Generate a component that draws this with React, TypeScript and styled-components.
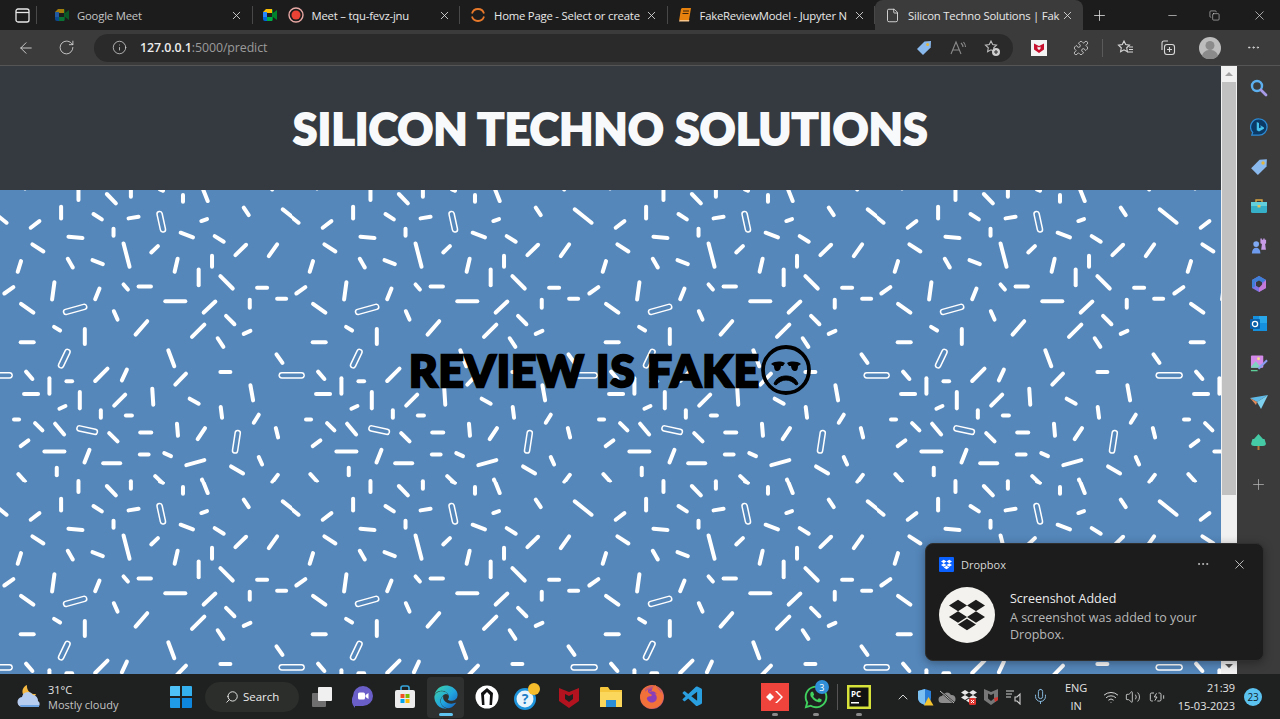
import React from "react";
import styled, { createGlobalStyle } from "styled-components";
import { ArrowLeft, RotateCw, Info, Search, X, Plus, Minus, MoreHorizontal, ChevronUp, Mic, Wifi, Volume2, BatteryCharging, Puzzle, Copy, File } from "lucide-react";
import { FaDropbox, FaEdge, FaWhatsapp, FaFirefoxBrowser } from "react-icons/fa";
import { VscVscode } from "react-icons/vsc";

const W = 877.5;
type L = [number, number, number, number, number?];
const lines: L[] = [
  [235,-6,235,30],[320,12,347,40],[392,-5,392,20],[548,15,548,35],[605,-10,622,33],[847,58,897,98],[92,113,118,93],[183,50,183,85],[280,72,305,88],[385,85,415,80],[478,72,488,118,1],[603,93,620,87],[730,53,745,75],[340,116,340,137],[205,140,247,144],[541,128,578,142],[643,138,670,155],[97,163,130,184],[453,187,473,168],[705,195,737,164],[805,198,830,163],[370,160,388,230],[203,206,218,232],[277,210,308,222],[53,245,63,213],[523,245,532,206],[635,197,635,230],[595,238,595,285],[660,258,697,295],[163,276,156,328],[298,295,285,327],[370,283,383,298],[415,289,452,289],[770,293,800,293],[13,310,40,291],[830,326,857,326],[495,333,555,333],[198,365,252,350,1],[63,341,100,367],[610,367,645,334],[748,329,748,353],[341,363,352,388],[677,377,702,402],[406,433,441,393],[162,410,180,421],[575,440,612,403],[730,431,750,422],[254,416,254,461],[62,456,101,456],[652,444,669,470],[183,525,202,485,1],[504,480,522,528],[828,492,846,518],[844,555,906,555,1],[78,544,97,566],[285,572,322,535],[365,570,380,538],[660,545,690,545],[525,583,557,550],[148,564,148,610],[199,573,216,573],[72,611,114,611],[750,585,758,630],[239,605,239,654],[342,646,375,613],[456,595,459,643],[568,625,595,640],[178,655,196,647],[661,650,665,682],[302,660,302,682],[377,675,395,675],[42,687,57,687],[760,697,775,673],[105,698,127,720],[165,700,192,732],[238,714,284,724,1],[530,700,533,736],[420,726,453,726],[592,746,614,713],[327,728,352,753],[826,713,833,741],[712,728,704,780,1],[62,767,85,750],[133,783,193,783],[253,816,268,778],[419,792,445,792],[492,788,512,797],[558,824,612,809],[309,818,360,818],[775,800,785,822],[692,828,728,849],[170,832,170,854],[55,851,75,873],[465,857,487,878],[815,876,832,853],[479,-2,488,2],
];
const BLUE = "#5587bb";
const tile = (() => {
  let s = "";
  for (const [a, b, c, d, o] of lines)
    for (const dx of [-W, 0, W])
      for (const dy of [-W, 0, W]) {
        const seg = `x1='${a + dx}' y1='${b + dy}' x2='${c + dx}' y2='${d + dy}' stroke-linecap='round'`;
        s += o
          ? `<line ${seg} stroke='#fff' stroke-width='20'/><line ${seg} stroke='${BLUE}' stroke-width='11'/>`
          : `<line ${seg} stroke='#fff' stroke-width='12'/>`;
      }
  const svg = `<svg xmlns='http://www.w3.org/2000/svg' viewBox='0 0 ${W} ${W}'>${s}</svg>`;
  return `url("data:image/svg+xml,${encodeURIComponent(svg)}")`;
})();

const Global = createGlobalStyle`
  html, body { margin: 0; padding: 0; background: #1f1f1f; overflow: hidden; }
  * { box-sizing: border-box; }
`;
const Screen = styled.div`
  position: relative; width: 1280px; height: 719px; display: flex; flex-direction: column; overflow: hidden;
  font-family: "Open Sans", "Noto Sans", sans-serif; color: #fff;
`;
const TabStrip = styled.div`
  height: 30px; flex: none; background: #1c1c1c; display: flex; align-items: stretch;
`;
const WindowBtn = styled.div`
  width: 36px; display: flex; align-items: center; justify-content: center; padding-left: 8px; color: #e8e8e8;
`;
const VSep = styled.div<{ $h?: number; $c?: string }>`
  flex: none; width: 1px; height: ${p => p.$h ?? 18}px; align-self: center; background: ${p => p.$c ?? "#4a4a4a"};
`;
const Tabs = styled.div`
  display: flex; margin-left: 8px;
`;
const Tab = styled.div<{ $active?: boolean; $w?: number }>`
  position: relative; width: ${p => p.$w ?? 207.5}px; display: flex; align-items: center; gap: 8px; padding: 0 8px 0 ${p => (p.$active ? 10 : 10)}px;
  background: ${p => (p.$active ? "#3b3b3b" : "transparent")}; border-radius: 8px 8px 0 0;
  &::after { content: ${p => (p.$active ? "none" : '""')}; position: absolute; right: 0; top: 6px; bottom: 6px; width: 1px; background: #484848; }
`;
const TabIcons = styled.div`
  flex: none; display: flex; align-items: center; gap: 11px;
`;
const TabTitle = styled.div<{ $dim?: boolean }>`
  flex: 1; min-width: 0; white-space: nowrap; font-size: 11.3px; letter-spacing: -0.2px; color: ${p => (p.$dim ? "#c4c4c4" : "#e8e8e8")};
`;
const TabClose = styled.div`
  flex: none; width: 16px; display: flex; justify-content: center; color: #dcdcdc;
`;
const NewTab = styled.div`
  width: 32px; display: flex; align-items: center; justify-content: center; color: #e6e6e6;
`;
const Caption = styled.div`
  margin-left: auto; display: flex; align-items: center; color: #e4e4e4;
`;
const CaptionBtn = styled.div<{ $w: number }>`
  width: ${p => p.$w}px; display: flex; justify-content: center; align-items: center;
`;
const Toolbar = styled.div`
  height: 36px; flex: none; background: #3b3b3b; display: flex; align-items: center; padding-left: 6px; border-bottom: 1px solid #555;
`;
const ToolBtn = styled.div<{ $w: number }>`
  flex: none; width: ${p => p.$w}px; display: flex; align-items: center; justify-content: center; color: #d8d8d8;
`;
const UrlPill = styled.div`
  margin-left: 7px; width: 919px; height: 28px; border-radius: 14px; background: #2a2a2a; display: flex; align-items: center; padding-left: 18px; padding-right: 4px;
`;
const UrlText = styled.div`
  margin-left: 13px; font-size: 12.4px; letter-spacing: -0.1px; color: #9b9b9b; flex: 1;
  b { font-weight: 600; color: #ececec; }
`;
const Main = styled.div`
  flex: 1; min-height: 0; display: flex; position: relative;
`;
const Page = styled.div`
  flex: 1; min-width: 0; display: flex; flex-direction: column; background: ${BLUE};
`;
const Header = styled.div`
  flex: none; height: 124px; background: #343a40; display: flex; align-items: center; justify-content: center;
`;
const Title = styled.h1`
  margin: 0; font-family: Lato, sans-serif; font-weight: 900; font-size: 44px; line-height: 1; letter-spacing: 0.45px; color: #f8f9fa; -webkit-text-stroke: 2px #f8f9fa; white-space: nowrap;
`;
const Pattern = styled.div`
  flex: 1; background-color: ${BLUE}; background-image: ${tile}; background-size: 292.5px 292.5px; background-repeat: repeat;
  display: flex; align-items: flex-start; justify-content: center; padding-top: 154px;
`;
const Verdict = styled.div`
  display: flex; align-items: center;
`;
const VerdictText = styled.h2`
  margin: 0; font-family: Lato, sans-serif; font-weight: 900; font-size: 44px; line-height: 1; letter-spacing: 1px; color: #000; -webkit-text-stroke: 2.4px #000; white-space: nowrap;
`;
const Scrollbar = styled.div`
  flex: none; width: 16px; background: #f1f1f1; display: flex; flex-direction: column; align-items: center;
`;
const ScrollArrow = styled.div<{ $down?: boolean }>`
  flex: none; height: 16px; width: 100%; display: flex; align-items: center; justify-content: center;
  &::before { content: ""; border-left: 4px solid transparent; border-right: 4px solid transparent;
    ${p => (p.$down ? "border-top: 4px solid #505050;" : "border-bottom: 4px solid #a3a3a3;")} }
`;
const ScrollThumb = styled.div`
  flex: none; width: 14px; height: 413px; background: #c1c1c1;
`;
const ScrollFill = styled.div`
  flex: 1;
`;
const Sidebar = styled.div`
  flex: none; width: 43px; background: #3b3b3b; display: flex; flex-direction: column; align-items: center; gap: 21.3px; padding: 13px 0 0 0;
`;
const SideIcon = styled.div`
  width: 18px; height: 18px; flex: none; display: flex; align-items: center; justify-content: center; color: #bdbdbd;
  &:last-child { margin-top: 4px; }
`;
const Taskbar = styled.div`
  height: 45px; flex: none; background: #1f2020; display: flex; align-items: center; position: relative; padding-left: 17px;
`;
const Weather = styled.div`
  width: 143px; display: flex; align-items: center; gap: 5px; flex: none;
`;
const WeatherText = styled.div`
  font-size: 11px; line-height: 15px; color: #e4e4e4;
`;
const WeatherSub = styled.div`
  color: #c4c4c4;
`;
const TaskSlot = styled.div<{ $active?: boolean; $mark?: boolean; $w?: number }>`
  position: relative; flex: none; width: ${p => p.$w ?? 41.2}px; height: 45px; display: flex; align-items: center; justify-content: center;
  &::before { content: ${p => (p.$active ? '""' : "none")}; position: absolute; inset: 3px 2px 1px; background: #2f3030; border-radius: 4px; }
  &::after { content: ${p => (p.$active ? '""' : p.$mark ? '""' : "none")}; position: absolute; bottom: 3px; left: 50%; transform: translateX(-50%);
    width: ${p => (p.$active ? 14 : 6)}px; height: 3px; border-radius: 2px; background: ${p => (p.$active ? "#60c5f1" : "#8a8a8a")}; }
  & > * { position: relative; }
`;
const SearchPill = styled.div`
  flex: none; width: 94px; height: 30px; margin: 0 2.5px 0 4px; border-radius: 15px; background: #2b2e2a; display: flex; align-items: center; justify-content: center; gap: 4px; font-size: 11.5px; color: #ececec;
`;
const Glass = styled(Search)`
  transform: scaleX(-1);
`;
const FoxDisc = styled.div`
  width: 24px; height: 24px; border-radius: 50%; background: radial-gradient(circle at 55% 55%, #8a3fb8 0 45%, #f2703a 70%); display: flex; align-items: center; justify-content: center;
`;
const Spacer = styled.div<{ $w: number }>`
  flex: none; width: ${p => p.$w}px;
`;
const Tray = styled.div`
  display: flex; align-items: center; flex: none; margin-left: 13px;
`;
const TrayItem = styled.div<{ $w?: number }>`
  flex: none; width: ${p => p.$w ?? 22}px; display: flex; align-items: center; justify-content: center; color: #d4d4d4;
`;
const Lang = styled.div`
  flex: none; width: 36px; margin-left: 4px; margin-right: 6px; text-align: center; font-size: 11px; line-height: 18px; color: #e4e4e4;
`;
const Clock = styled.div`
  flex: none; width: 58px; margin-left: 7px; text-align: right; font-size: 11px; line-height: 18px; color: #e4e4e4; white-space: nowrap;
`;
const Badge = styled.div`
  flex: none; width: 18px; height: 18px; margin-left: 9px; border-radius: 50%; background: #5cc3f0; color: #10232e; font-size: 10px; display: flex; align-items: center; justify-content: center;
`;
const CountBubble = styled.div`
  position: absolute !important; top: 6px; right: 8px; width: 14px; height: 14px; border-radius: 50%; background: #2f8fd8; color: #fff; font-size: 9px; display: flex; align-items: center; justify-content: center;
`;
const Toast = styled.div`
  position: absolute; left: 925px; top: 543px; width: 339px; height: 118px; border-radius: 8px; background: #1c1c1c; border: 1px solid #2f2f2f; padding: 12px 14px 0 13px; box-shadow: 0 2px 10px rgba(0,0,0,.35);
`;
const ToastHead = styled.div`
  display: flex; align-items: center; height: 16px; font-size: 11px; color: #d8d8d8; gap: 7px;
`;
const ToastLogo = styled.div`
  width: 15px; height: 15px; background: #0b61ff; border-radius: 1px; display: flex; align-items: center; justify-content: center; color: #fff;
`;
const ToastActions = styled.div`
  margin-left: auto; display: flex; align-items: center; gap: 22px; color: #cfcfcf; padding-right: 2px;
`;
const ToastBody = styled.div`
  display: flex; gap: 15px; margin-top: 15px;
`;
const ToastAvatar = styled.div`
  flex: none; width: 56px; height: 56px; border-radius: 50%; background: #f3f2ee; color: #1c1c1c; display: flex; align-items: center; justify-content: center;
`;
const ToastText = styled.div`
  font-size: 12.5px; line-height: 17px; color: #b8b8b8; margin-top: 3px; width: 215px;
`;
const ToastTitle = styled.div`
  color: #ececec; line-height: 18px; margin-bottom: 1px;
`;
const HiddenDefs = styled.svg`
  position: absolute; width: 0; height: 0;
`;

const Meet = ({ dim }: { dim?: boolean }) => (
  <svg width="14" height="14" viewBox="0 0 14 14" opacity={dim ? 0.6 : 1}>
    <path d="M0 4 3 1h6v4H4v4H0z" fill="#fbbc04" />
    <path d="M0 4h4v5H0z" fill="#2684fc" />
    <path d="M0 9h4v4H2a2 2 0 0 1-2-2z" fill="#0066da" />
    <path d="M4 9h5v4H4z" fill="#00ac47" />
    <path d="M4 5h5v4H4z" fill="#1c1c1c" />
    <path d="M9 1v12l1-1V2zM10 5l4-3v10l-4-3z" fill="#00832d" />
  </svg>
);
const Rec = () => (
  <svg width="16" height="16" viewBox="0 0 16 16"><circle cx="8" cy="8" r="7" fill="none" stroke="#e9a9a4" strokeWidth="1.4" /><circle cx="8" cy="8" r="4.5" fill="#ea4335" /></svg>
);
const Swirl = () => (
  <svg width="16" height="16" viewBox="0 0 16 16" fill="none" stroke="#e8792b" strokeWidth="1.8"><path d="M2 6.5a6.2 6 0 0 1 12 0" /><path d="M2 9.5a6.2 6 0 0 0 12 0" /></svg>
);
const Book = () => (
  <svg width="14" height="16" viewBox="0 0 14 16"><path d="M4 1h9l-2 12H1.5L1 14l2-12z" fill="#e8820e" /><path d="M1 14.5h10l.4-1.5H1.5z" fill="#f7c48a" /><path d="M5 4h6M4.5 6.5h6" stroke="#3a2208" strokeWidth="1" /></svg>
);
const PriceTag = ({ s = 16 }: { s?: number }) => (
  <svg width={s} height={s} viewBox="0 0 16 16"><path d="M1 9 8.5 1.5 15 1l-.3 6.5L7 15z" fill="#8ab9ee" /><circle cx="11.6" cy="4.4" r="1.5" fill="#e2b53c" /></svg>
);
const McAfee = () => (
  <svg width="16" height="16" viewBox="0 0 16 16"><rect width="16" height="16" fill="#f3f3f3" /><path d="M3 3.5 8 6l5-2.500v6L8 13 3 9.500z" fill="#c8102e" /><path d="M6.500 6.500 8 7.500l1.500-1v2.300L8 10 6.500 8.800z" fill="#f3f3f3" /></svg>
);
const Avatar = () => (
  <svg width="22" height="22" viewBox="0 0 22 22"><circle cx="11" cy="11" r="11" fill="#bdbdbd" /><circle cx="11" cy="8.500" r="4.500" fill="#8b8b8b" /><path d="M3 19c1-5 5-6 8-6s7 1 8 6a11 11 0 0 1-16 0" fill="#8b8b8b" /></svg>
);
const Collections = () => (
  <svg width="17" height="17" viewBox="0 0 17 17" fill="none" stroke="#d8d8d8" strokeWidth="1.1"><path d="M3 11V4a2 2 0 0 1 2-2h4" /><rect x="5.500" y="5.500" width="10" height="10" rx="2.500" /><path d="M10.500 8v5M8 10.500h5" /></svg>
);
const FavList = () => (
  <svg width="17" height="17" viewBox="0 0 17 17" fill="none" stroke="#d8d8d8" strokeWidth="1.1"><path d="m7 2 1.700 3.600 3.800.5-2.800 2.700.7 3.900L7 10.800 3.600 12.700l.7-3.900L1.500 6.100l3.800-.5z" /><path d="M12 8h4M12 10.500h4M10.500 13H16" /></svg>
);
const StarPlus = () => (
  <svg width="18" height="18" viewBox="0 0 18 18" fill="none" stroke="#bcbcbc" strokeWidth="1.1"><path d="m8 2 1.700 3.600 3.800.5-2.800 2.700.7 3.900L8 10.800 4.600 12.700l.7-3.900L2.500 6.100l3.800-.5z" /><circle cx="13" cy="13" r="4" fill="#cfcfcf" stroke="none" /><path d="M13 11v4M11 13h4" stroke="#333" /></svg>
);
const ReadAloud = () => (
  <svg width="18" height="16" viewBox="0 0 18 16" fill="none" stroke="#8a8a8a" strokeWidth="1.1"><path d="M2 14 7 2l5 12M4 10h6" /><path d="M12 3q2 2 2 4M14.500 2q2 2.500 2 5" /></svg>
);
const ExtPuzzle = () => <Puzzle size={16} strokeWidth={1.2} />;
const SearchBlue = () => (
  <svg width="18" height="18" viewBox="0 0 18 18" fill="none"><circle cx="7" cy="7" r="5" stroke="#5db0ef" strokeWidth="2.4" /><path d="m11 11 5 5" stroke="#a79be8" strokeWidth="2.800" strokeLinecap="round" /></svg>
);
const Bing = () => (
  <svg width="20" height="20" viewBox="0 0 20 20"><path d="M10 1a9 9 0 1 1 0 18H2l1-3a9 9 0 0 1 7-15z" fill="#0b3a66" stroke="#2c8bd6" strokeWidth="1.400" /><path d="M7.500 4.500 10 5.500v6l3-1.500-2-1 1-.8 3.500 2.300v1.500L10 15l-2.500-1.500z" fill="#45c1ee" /></svg>
);
const Toolbox = () => (
  <svg width="18" height="16" viewBox="0 0 18 16"><path d="M6 4V2h6v2" fill="none" stroke="#d9a441" strokeWidth="1.400" /><rect x="1" y="4" width="16" height="11" rx="1.500" fill="#35b0c8" /><rect x="1" y="4" width="16" height="4" fill="#62d0dc" /><rect x="7.500" y="7" width="3" height="2.500" fill="#e6c35a" /></svg>
);
const Chess = () => (
  <svg width="19" height="19" viewBox="0 0 19 19"><circle cx="6.500" cy="8" r="3" fill="#7fa9f2" /><path d="M2 18c0-4 2-6 4.500-6S11 14 11 18z" fill="#6f9bee" /><path d="M11 2h1.500v1.500H14V2h1.500v1.500H17V2v5l-1 1 .8 6h-5l.8-6-1.600-1z" fill="#c79be8" /></svg>
);
const Drop = () => (
  <svg width="18" height="18" viewBox="0 0 18 18"><path d="M9 1 16 5v8l-7 4-7-4V5z" fill="#7f72e4" /><path d="M9 1 16 5 9 9 5 6.500v5l-3 1.500V5z" fill="#3f7fd8" /><path d="M9 5.500l3 1.800v3.400L9 12.500 6 10.700V7.300z" fill="#3b3b3b" /><path d="M16 5v8l-7 4v-4z" fill="#c37ad8" /></svg>
);
const Outlook = () => (
  <svg width="17" height="17" viewBox="0 0 17 17"><rect x="3" y="1" width="14" height="15" fill="#1490df" /><rect x="9" y="1" width="8" height="7" fill="#28a8ea" /><rect y="4" width="10" height="10" rx="1" fill="#0a5fa8" /><circle cx="5" cy="9" r="2.600" fill="none" stroke="#fff" strokeWidth="1.300" /></svg>
);
const Paint = () => (
  <svg width="19" height="19" viewBox="0 0 19 19"><rect x="1" y="1" width="13" height="13" rx="1" fill="#d48ae8" /><path d="M1 13 6 7l4 5 2-2v4H1z" fill="#7ed0c2" /><circle cx="9" cy="4.500" r="1.500" fill="#f8e08a" /><path d="m18 6-9 9" stroke="#8a9cf2" strokeWidth="2.200" /><path d="M1 17h7" stroke="#5fcf9a" strokeWidth="1.400" /></svg>
);
const Plane = () => (
  <svg width="18" height="16" viewBox="0 0 18 16"><path d="M0 4 18 1 7 8z" fill="#5fb9e6" /><path d="m18 1-7 14-4-7z" fill="#7dd0ee" /><path d="M0 4 7 8l-1 3z" fill="#e08a5a" /></svg>
);
const Tree = () => (
  <svg width="17" height="18" viewBox="0 0 17 18"><path d="M8.500 1 13 6h1.500L16 11q-.5 2-3 2H4q-2.500 0-3-2l1.500-5H4z" fill="#45c9a4" /><path d="M7.500 13h2v4h-2z" fill="#b8763a" /></svg>
);
const Face = () => (
  <svg width="52" height="52" viewBox="0 0 52 52" fill="none">
    <circle cx="26" cy="26" r="23" stroke="#000" strokeWidth="3.800" />
    <path d="M11 20c4-3 10-3 14-1l-2 3h-2c0 3-2 5-4 5s-3-2-3-5z" fill="#000" />
    <path d="M41 20c-4-3-10-3-14-1l2 3h2c0 3 2 5 4 5s3-2 3-5z" fill="#000" />
    <path d="M14 40c2-6 7-8 12-8s10 2 12 8l-2 1c-3-3-6-5-10-5s-7 2-10 5z" fill="#000" stroke="#000" />
  </svg>
);
const Sun = () => (
  <svg width="26" height="26" viewBox="0 0 26 26"><path d="M10 1a7 7 0 1 0 9 9 8 8 0 0 1-9-9z" fill="#f5b942" /><path d="M6 23a5 5 0 0 1-1-10 6 6 0 0 1 11-2 5.500 5.500 0 0 1 5 6 3.500 3.500 0 0 1 0 6z" fill="#b6cdf0" /><path d="M4 23h18v-2H3z" fill="#6da3e0" /></svg>
);
const WinLogo = () => (
  <svg width="22" height="22" viewBox="0 0 22 22"><path d="M0 1a1 1 0 0 1 1-1h9v10H0z" fill="#4fc3f7" /><path d="M12 0h9a1 1 0 0 1 1 1v9H12z" fill="#35b0ee" /><path d="M0 12h10v10H1a1 1 0 0 1-1-1z" fill="#1f9be8" /><path d="M12 12h10v9a1 1 0 0 1-1 1h-9z" fill="#0f86de" /></svg>
);
const TaskView = () => (
  <svg width="22" height="22" viewBox="0 0 22 22"><rect x="1" y="7" width="14" height="14" rx="1" fill="#6f6f6f" /><rect x="7" y="1" width="14" height="14" rx="1" fill="#f0f0f0" /></svg>
);
const Chat = () => (
  <svg width="22" height="24" viewBox="0 0 22 24"><path d="M11 1a10 10 0 0 1 0 20H3v2a10 10 0 0 1-2-12A10 10 0 0 1 11 1z" fill="#6a5fc8" /><rect x="6" y="7.500" width="7" height="7" rx="1.500" fill="#fff" /><path d="m13.500 10 3-2v6l-3-2z" fill="#fff" /></svg>
);
const Store = () => (
  <svg width="22" height="24" viewBox="0 0 22 24"><path d="M7 6V3a2 2 0 0 1 2-2h4a2 2 0 0 1 2 2v3" fill="none" stroke="#38a6dc" strokeWidth="1.600" /><rect x="1" y="5" width="20" height="18" rx="2" fill="#ececec" /><rect x="6.500" y="9" width="4" height="4" fill="#f25022" /><rect x="11.500" y="9" width="4" height="4" fill="#7fba00" /><rect x="6.500" y="14" width="4" height="4" fill="#00a4ef" /><rect x="11.500" y="14" width="4" height="4" fill="#ffb900" /></svg>
);
const Arch = () => (
  <svg width="24" height="24" viewBox="0 0 24 24"><circle cx="12" cy="12" r="11.500" fill="#fff" /><path d="M12 3 6 8l1 12h2.500L9 10l3-3 3 3-.5 10H17l1-12z" fill="#111" /></svg>
);
const Help = () => (
  <svg width="30" height="28" viewBox="0 0 30 28"><circle cx="12" cy="16" r="11" fill="#1e94dc" /><circle cx="12" cy="16" r="8.500" fill="#e8f4fb" /><text x="12" y="21" textAnchor="middle" fontSize="14" fontWeight="700" fill="#1e7fc8" fontFamily="Open Sans, sans-serif">?</text><circle cx="21" cy="6" r="6" fill="#f5bd2c" /></svg>
);
const Shield = () => (
  <svg width="22" height="24" viewBox="0 0 22 24"><path d="M1 3 11 7l10-4v13l-10 7L1 16z" fill="#b3131f" /><path d="M7 9 11 11l4-2v5l-4 3-4-3z" fill="#1f2020" /></svg>
);
const Folder = () => (
  <svg width="24" height="22" viewBox="0 0 24 22"><path d="M1 2a1 1 0 0 1 1-1h7l2 3h12v17H1z" fill="#f5c63b" /><path d="M1 6h22v15H1z" fill="#fbd75b" /><rect x="7" y="14" width="10" height="7" fill="#2a8fd8" /></svg>
);
const AnyDesk = () => (
  <svg width="28" height="28" viewBox="0 0 28 28"><rect width="28" height="28" fill="#ef443b" /><path d="m9 10 4 4-4 4-4-4z" fill="#fff" /><path d="m14 8 6 6-6 6 2 0 6-6-6-6z" fill="#fff" /></svg>
);
const PyCharm = () => (
  <svg width="24" height="24" viewBox="0 0 24 24"><rect width="24" height="24" fill="#d6e23a" /><rect x="2.500" y="2.500" width="19" height="19" fill="#111" /><text x="4" y="12" fontSize="8" fontWeight="700" fill="#fff" fontFamily="Open Sans, sans-serif">PC</text><rect x="4" y="17" width="8" height="1.500" fill="#fff" /></svg>
);
const Defender = () => (
  <svg width="17" height="18" viewBox="0 0 17 18"><path d="M1 3 8 1l6 2v7q0 5-6 7-7-2-7-7z" fill="#2b7fd6" /><path d="M8 1v16q-7-2-7-7V3z" fill="#7cc0f2" /><path d="m11.500 9 5 8.500h-9.500z" fill="#f4c430" /></svg>
);
const CloudOff = () => (
  <svg width="18" height="14" viewBox="0 0 18 14"><path d="M4 13a3.500 3.500 0 0 1 0-7 5 5 0 0 1 9-1 4 4 0 0 1 1 8z" fill="#8c8c8c" /><path d="m2 1 14 12" stroke="#1f2020" strokeWidth="2" /><path d="m2 1 14 12" stroke="#c0c0c0" strokeWidth="1" /></svg>
);
const DbxRed = () => (
  <svg width="16" height="16" viewBox="0 0 16 16"><path d="m4 1 4 2.500-4 2.500-4-2.500zM12 1l4 2.500L12 6 8 3.500zM4 6l4 2.500L4 11 0 8.500zM12 6l4 2.500L12 11 8 8.500zM8 9.500l3 2-3 2-3-2z" fill="#e8e8e8" /><rect x="8" y="9" width="7" height="7" rx="1.500" fill="#e0342e" /><path d="m10 11 3 3m0-3-3 3" stroke="#fff" strokeWidth="1" /></svg>
);
const McTray = () => (
  <svg width="16" height="17" viewBox="0 0 16 17"><path d="M1 1 8 4l7-3v11l-7 5-7-5z" fill="#777" /><path d="M5 5.500 8 7l3-1.500v5L8 13l-3-2.500z" fill="#1f2020" /><path d="m11 10 4-1v3l-3 2z" fill="#d2352f" /></svg>
);
const Notes = () => (
  <svg width="18" height="16" viewBox="0 0 18 16" fill="none" stroke="#cfcfcf" strokeWidth="1.100"><path d="M1 2h8M1 5h6M1 8h5" /><path d="M10 8h2l3-3v10l-3-3h-2z" /></svg>
);

const tabs = [
  { title: "Google Meet", icon: <Meet dim />, dim: true },
  { title: "Meet – tqu-fevz-jnu", icon: <TabIcons><Meet /><Rec /></TabIcons> },
  { title: "Home Page - Select or create", icon: <Swirl /> },
  { title: "FakeReviewModel - Jupyter N", icon: <Book /> },
];
const sideIcons = [<SearchBlue />, <Bing />, <PriceTag s={18} />, <Toolbox />, <Chess />, <Drop />, <Outlook />, <Paint />, <Plane />, <Tree />, <Plus size={17} strokeWidth={1} />];

export default function App() {
  return (
    <Screen>
      <Global />
      <HiddenDefs>
        <defs>
          <linearGradient id="edgeGrad" x1="0" y1="0" x2="1" y2="1">
            <stop offset="0" stopColor="#3fd6a0" />
            <stop offset=".55" stopColor="#22a6e0" />
            <stop offset="1" stopColor="#1458b8" />
          </linearGradient>
        </defs>
      </HiddenDefs>
      <TabStrip>
        <WindowBtn>
          <svg width="15" height="15" viewBox="0 0 15 15" fill="none" stroke="currentColor" strokeWidth="1.300"><rect x="1" y="1" width="13" height="13" rx="2" /><path d="M1 4.500h13" /></svg>
        </WindowBtn>
        <VSep />
        <Tabs>
          {tabs.map(t => (
            <Tab key={t.title}>
              {t.icon}
              <TabTitle $dim={t.dim}>{t.title}</TabTitle>
              <TabClose><X size={13} strokeWidth={1.6} /></TabClose>
            </Tab>
          ))}
          <Tab $active $w={208}>
            <File size={15} strokeWidth={1.4} color="#e4e4e4" />
            <TabTitle>Silicon Techno Solutions | Fak</TabTitle>
            <TabClose><X size={13} strokeWidth={1.6} /></TabClose>
          </Tab>
        </Tabs>
        <NewTab><Plus size={17} strokeWidth={1.1} /></NewTab>
        <Caption>
          <CaptionBtn $w={36}><Minus size={13} strokeWidth={1.2} /></CaptionBtn>
          <CaptionBtn $w={48}><Copy size={11} strokeWidth={1.2} /></CaptionBtn>
          <CaptionBtn $w={42}><X size={15} strokeWidth={1.1} /></CaptionBtn>
        </Caption>
      </TabStrip>
      <Toolbar>
        <ToolBtn $w={40}><ArrowLeft size={18} strokeWidth={1.2} /></ToolBtn>
        <ToolBtn $w={41}><RotateCw size={17} strokeWidth={1.2} /></ToolBtn>
        <UrlPill>
          <Info size={15} strokeWidth={1.2} color="#d8d8d8" />
          <UrlText><b>127.0.0.1</b>:5000/predict</UrlText>
          <ToolBtn $w={34}><PriceTag /></ToolBtn>
          <ToolBtn $w={34}><ReadAloud /></ToolBtn>
          <ToolBtn $w={34}><StarPlus /></ToolBtn>
        </UrlPill>
        <Spacer $w={5} />
        <ToolBtn $w={42}><McAfee /></ToolBtn>
        <ToolBtn $w={42}><ExtPuzzle /></ToolBtn>
        <VSep $c="#5a5a5a" />
        <ToolBtn $w={45}><FavList /></ToolBtn>
        <ToolBtn $w={39}><Collections /></ToolBtn>
        <ToolBtn $w={46}><Avatar /></ToolBtn>
        <ToolBtn $w={40}><MoreHorizontal size={15} strokeWidth={1.6} /></ToolBtn>
      </Toolbar>
      <Main>
        <Page>
          <Header><Title>SILICON TECHNO SOLUTIONS</Title></Header>
          <Pattern>
            <Verdict>
              <VerdictText>REVIEW IS FAKE</VerdictText>
              <Face />
            </Verdict>
          </Pattern>
        </Page>
        <Scrollbar>
          <ScrollArrow />
          <ScrollThumb />
          <ScrollFill />
          <ScrollArrow $down />
        </Scrollbar>
        <Sidebar>
          {sideIcons.map((ic, i) => <SideIcon key={i}>{ic}</SideIcon>)}
        </Sidebar>
      </Main>
      <Taskbar>
        <Weather>
          <Sun />
          <WeatherText>31°C<WeatherSub>Mostly cloudy</WeatherSub></WeatherText>
        </Weather>
        <TaskSlot><WinLogo /></TaskSlot>
        <SearchPill><Glass size={14} strokeWidth={1.6} />Search</SearchPill>
        <TaskSlot><TaskView /></TaskSlot>
        <TaskSlot><Chat /></TaskSlot>
        <TaskSlot><Store /></TaskSlot>
        <TaskSlot $active><FaEdge size={24} fill="url(#edgeGrad)" /></TaskSlot>
        <TaskSlot><Arch /></TaskSlot>
        <TaskSlot><Help /></TaskSlot>
        <TaskSlot><Shield /></TaskSlot>
        <TaskSlot><Folder /></TaskSlot>
        <TaskSlot><FoxDisc><FaFirefoxBrowser size={24} color="#f2703a" /></FoxDisc></TaskSlot>
        <TaskSlot><VscVscode size={24} color="#2a9fe0" /></TaskSlot>
        <Spacer $w={41} />
        <TaskSlot $mark><AnyDesk /></TaskSlot>
        <TaskSlot $mark><FaWhatsapp size={26} color="#3fd05e" /><CountBubble>3</CountBubble></TaskSlot>
        <VSep $h={26} $c="#555" />
        <TaskSlot $mark><PyCharm /></TaskSlot>
        <Tray>
          <TrayItem><ChevronUp size={16} strokeWidth={1.5} /></TrayItem>
          <TrayItem><Defender /></TrayItem>
          <TrayItem><CloudOff /></TrayItem>
          <TrayItem><DbxRed /></TrayItem>
          <TrayItem><McTray /></TrayItem>
          <TrayItem $w={24}><Notes /></TrayItem>
          <TrayItem $w={28}><Mic size={17} strokeWidth={1.3} color="#8fc4ea" /></TrayItem>
        </Tray>
        <Lang>ENG<br />IN</Lang>
        <TrayItem><Wifi size={16} strokeWidth={1.5} /></TrayItem>
        <TrayItem><Volume2 size={16} strokeWidth={1.3} /></TrayItem>
        <TrayItem $w={26}><BatteryCharging size={16} strokeWidth={1.4} /></TrayItem>
        <Clock>21:39<br />15-03-2023</Clock>
        <Badge>23</Badge>
      </Taskbar>
      <Toast>
        <ToastHead>
          <ToastLogo><FaDropbox size={11} /></ToastLogo>
          Dropbox
          <ToastActions>
            <MoreHorizontal size={14} strokeWidth={1.4} />
            <X size={15} strokeWidth={1.4} />
          </ToastActions>
        </ToastHead>
        <ToastBody>
          <ToastAvatar><FaDropbox size={36} /></ToastAvatar>
          <ToastText>
            <ToastTitle>Screenshot Added</ToastTitle>
            A screenshot was added to your Dropbox.
          </ToastText>
        </ToastBody>
      </Toast>
    </Screen>
  );
}
